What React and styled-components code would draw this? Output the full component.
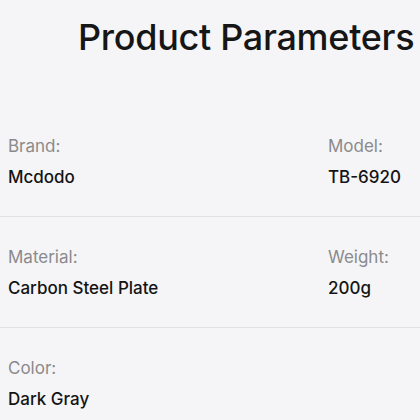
import React from "react";
import styled, { createGlobalStyle } from "styled-components";

const Global = createGlobalStyle`
  html, body { margin: 0; padding: 0; background: #f5f5f7; }
  body { font-family: Inter, "Noto Sans", sans-serif; overflow: hidden; }
`;

const Page = styled.div`
  width: 420px;
  height: 420px;
  background: #f5f5f7;
  overflow: hidden;
`;

const Title = styled.h1`
  margin: 15px 0 47px;
  padding-left: 78px;
  font-size: 36px;
  line-height: 44px;
  font-weight: 500;
  color: #161616;
  white-space: nowrap;
  letter-spacing: -0.3px;
`;

const Row = styled.div`
  display: grid;
  grid-template-columns: 320px 1fr;
  padding: 30px 0 29px 8px;
  border-bottom: ${(p) => (p.$last ? "none" : "1px solid #e1e1e4")};
`;

const Cell = styled.div`
  display: flex;
  flex-direction: column;
  gap: 11px;
`;

const Label = styled.span`
  font-size: 17px;
  line-height: 20px;
  color: #8a8a8c;
  font-weight: 400;
`;

const Value = styled.span`
  font-size: 17px;
  line-height: 20px;
  color: #141414;
  font-weight: 500;
`;

const rows = [
  [["Brand:", "Mcdodo"], ["Model:", "TB-6920"]],
  [["Material:", "Carbon Steel Plate"], ["Weight:", "200g"]],
  [["Color:", "Dark Gray"]],
];

export default function App() {
  return (
    <Page>
      <Global />
      <Title>Product Parameters</Title>
      {rows.map((r, i) => (
        <Row key={i} $last={i === rows.length - 1}>
          {r.map(([l, v]) => (
            <Cell key={l}>
              <Label>{l}</Label>
              <Value>{v}</Value>
            </Cell>
          ))}
        </Row>
      ))}
    </Page>
  );
}
